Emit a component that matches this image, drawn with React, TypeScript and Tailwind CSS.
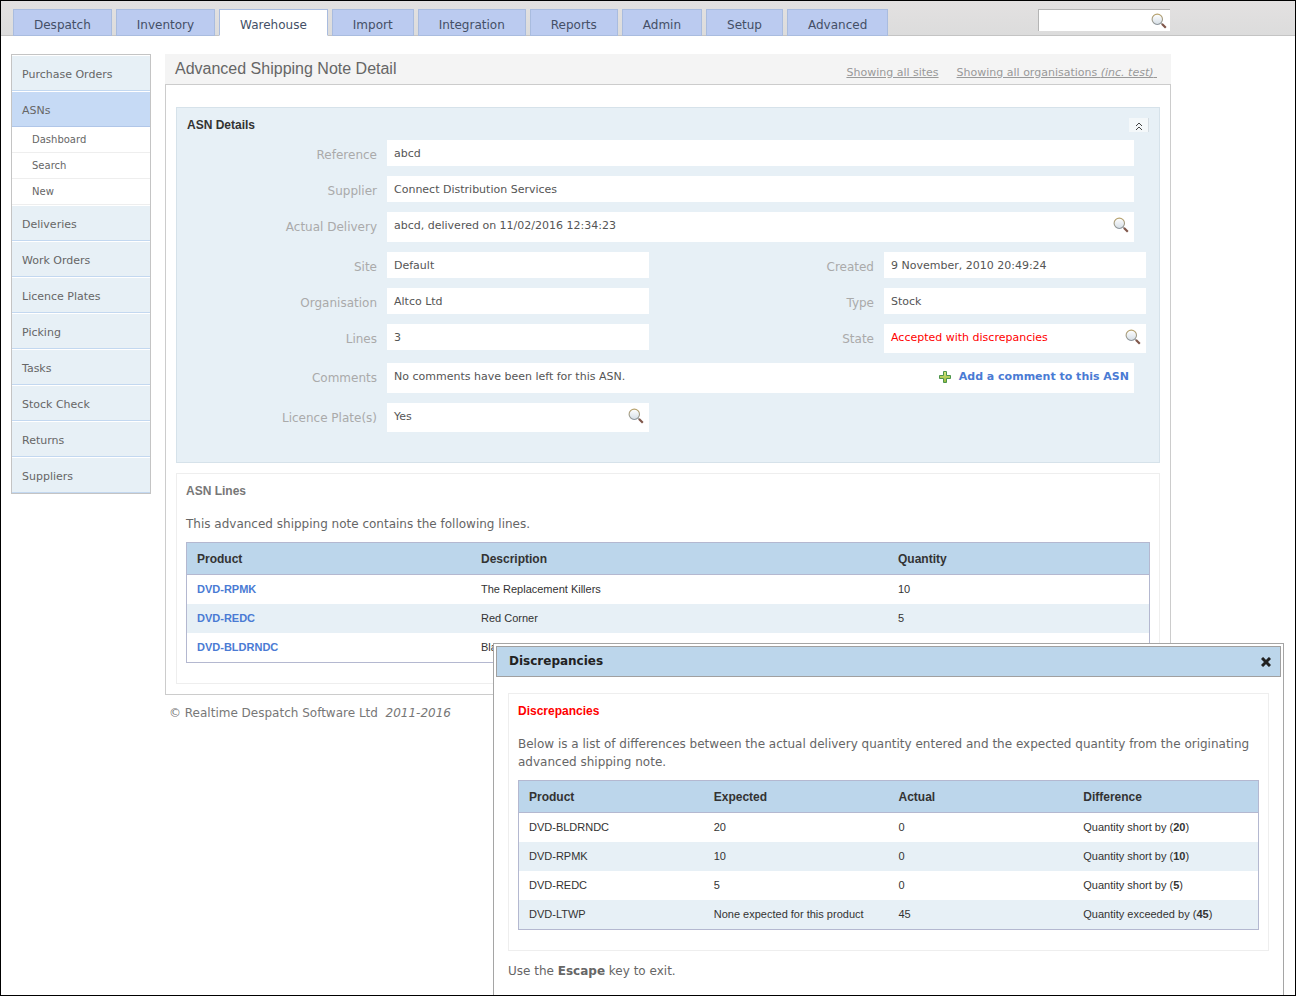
import { type ReactNode } from "react";

const tabs = ["Despatch", "Inventory", "Warehouse", "Import", "Integration", "Reports", "Admin", "Setup", "Advanced"];

const menu = [
  { label: "Purchase Orders" },
  { label: "ASNs", active: true, children: ["Dashboard", "Search", "New"] },
  { label: "Deliveries" },
  { label: "Work Orders" },
  { label: "Licence Plates" },
  { label: "Picking" },
  { label: "Tasks" },
  { label: "Stock Check" },
  { label: "Returns" },
  { label: "Suppliers" },
];

const lines = [
  { product: "DVD-RPMK", description: "The Replacement Killers", quantity: 10 },
  { product: "DVD-REDC", description: "Red Corner", quantity: 5 },
  { product: "DVD-BLDRNDC", description: "Blade Runner", quantity: 20 },
];

const discrepancies = [
  { product: "DVD-BLDRNDC", expected: "20", actual: 0, text: "Quantity short by", diff: 20 },
  { product: "DVD-RPMK", expected: "10", actual: 0, text: "Quantity short by", diff: 10 },
  { product: "DVD-REDC", expected: "5", actual: 0, text: "Quantity short by", diff: 5 },
  { product: "DVD-LTWP", expected: "None expected for this product", actual: 45, text: "Quantity exceeded by", diff: 45 },
];

function Magnifier() {
  return (
    <svg width="16" height="16" viewBox="0 0 16 16" aria-hidden="true">
      <defs>
        <linearGradient id="lens" x1="0" y1="0" x2="0" y2="1">
          <stop offset="0" stopColor="#ffffff" />
          <stop offset="1" stopColor="#d5dee6" />
        </linearGradient>
        <linearGradient id="rim" x1="0" y1="0" x2="0" y2="1">
          <stop offset="0" stopColor="#b9a36c" />
          <stop offset="1" stopColor="#8b949c" />
        </linearGradient>
      </defs>
      <path d="M10 10l1.5 1.5" stroke="#a9a9a9" strokeWidth="1.5" />
      <path d="M11 11l3.8 3.8" stroke="#80574a" strokeWidth="2.2" />
      <circle cx="6.3" cy="6.3" r="5.2" fill="url(#lens)" stroke="url(#rim)" strokeWidth="1.1" />
    </svg>
  );
}

function PlusIcon() {
  return (
    <svg width="12" height="12" viewBox="0 0 12 12" aria-hidden="true">
      <defs>
        <linearGradient id="plus" x1="0" y1="0" x2="0" y2="1">
          <stop offset="0" stopColor="#d8e67e" />
          <stop offset="1" stopColor="#93b83a" />
        </linearGradient>
      </defs>
      <path d="M4.5 .5h3v4h4v3h-4v4h-3v-4h-4v-3h4z" fill="url(#plus)" stroke="#4c944c" />
    </svg>
  );
}

function Lookup({ label }: { label: string }) {
  return (
    <button type="button" aria-label={label} className="mt-[5px] h-4 w-4 shrink-0">
      <Magnifier />
    </button>
  );
}

interface FieldProps {
  label: string;
  height?: string;
  color?: string;
  action?: ReactNode;
  children: ReactNode;
}

function Field({ label, height = "h-[26px]", color = "text-[#555555]", action, children }: FieldProps) {
  return (
    <div className="flex min-w-0 flex-1 items-start gap-[10px]">
      <dt className="h-[26px] w-[200px] shrink-0 text-right text-[12px] leading-[30px] text-[#aaaaaa]">{label}</dt>
      <dd className={`flex min-w-0 flex-1 items-start justify-between bg-white pr-[5px] pl-[7px] ${height}`}>
        <span className={`text-[11px] leading-[28px] ${color}`}>{children}</span>
        {action}
      </dd>
    </div>
  );
}

function Th({ className = "", children }: { className?: string; children: ReactNode }) {
  return (
    <th scope="col" className={`border-b border-[#b4b8d0] pl-[10px] text-left text-[12px] font-bold text-[#333333] ${className}`}>
      {children}
    </th>
  );
}

function Sidebar() {
  return (
    <nav aria-label="Warehouse" className="w-[140px] shrink-0 self-start border border-[#c4c4c4]">
      <ul>
        {menu.map((item) => (
          <li key={item.label}>
            <a
              href="#"
              className={`block h-9 border-t border-b border-t-white pt-px pl-[10px] text-[11px] leading-[36px] text-[#666666] ${
                item.active ? "border-b-[#b0c6e8] bg-[#c6daf5]" : "border-b-[#c3d8f0] bg-[#e7f0f6]"
              }`}
            >
              {item.label}
            </a>
            {item.children && (
              <ul>
                {item.children.map((child) => (
                  <li key={child} className="border-b border-[#eeeeee] bg-white">
                    <a href="#" className="block pl-5 text-[10px] leading-[25px] text-[#666666]">
                      {child}
                    </a>
                  </li>
                ))}
              </ul>
            )}
          </li>
        ))}
      </ul>
    </nav>
  );
}

function AsnDetails() {
  return (
    <section className="border border-[#d6e2ea] bg-[#e7f0f6] pb-[30px]">
      <div className="flex h-8 items-start justify-between pr-[10px] pl-[10px]">
        <h2 className="pt-[9px] font-['Liberation_Sans',sans-serif] text-[12px] leading-4 font-bold text-[#333333]">ASN Details</h2>
        <button
          type="button"
          aria-label="Collapse"
          className="mt-[10px] flex h-[14px] w-5 items-center justify-center border-r border-[#d4dce2] bg-[#f4f8fa] pt-[3px]"
        >
          <svg width="8" height="9" viewBox="0 0 8 9" fill="none" stroke="#444444" aria-hidden="true">
            <path d="M1 4l3-3 3 3M1 8l3-3 3 3" />
          </svg>
        </button>
      </div>
      <dl className="flex flex-col gap-[10px]">
        <div className="flex pr-[25px]">
          <Field label="Reference">abcd</Field>
        </div>
        <div className="flex pr-[25px]">
          <Field label="Supplier">Connect Distribution Services</Field>
        </div>
        <div className="flex pr-[25px]">
          <Field label="Actual Delivery" height="h-[30px]" action={<Lookup label="View delivery" />}>
            abcd, delivered on 11/02/2016 12:34:23
          </Field>
        </div>
        <div className="flex gap-[25px] pr-[13px]">
          <Field label="Site">Default</Field>
          <Field label="Created">9 November, 2010 20:49:24</Field>
        </div>
        <div className="flex gap-[25px] pr-[13px]">
          <Field label="Organisation">Altco Ltd</Field>
          <Field label="Type">Stock</Field>
        </div>
        <div className="flex gap-[25px] pr-[13px]">
          <Field label="Lines">3</Field>
          <Field label="State" height="h-[29px]" color="text-[#ff0000]" action={<Lookup label="View discrepancies" />}>
            Accepted with discrepancies
          </Field>
        </div>
        <div className="flex pr-[25px]">
          <Field
            label="Comments"
            height="h-[30px]"
            action={
              <a href="#" className="flex items-center gap-2 text-[11px] leading-[28px] font-bold text-[#4a7bd4]">
                <PlusIcon />
                Add a comment to this ASN
              </a>
            }
          >
            No comments have been left for this ASN.
          </Field>
        </div>
        <div className="flex gap-[25px] pr-[13px]">
          <Field label="Licence Plate(s)" height="h-[29px]" action={<Lookup label="View licence plates" />}>
            Yes
          </Field>
          <div className="flex-1" />
        </div>
      </dl>
    </section>
  );
}

function AsnLines() {
  return (
    <section className="border border-[#eeeeee] px-[9px] pt-[9px] pb-5">
      <h2 className="font-['Liberation_Sans',sans-serif] text-[12px] leading-4 font-bold text-[#777777]">ASN Lines</h2>
      <p className="mt-4 text-[12px] leading-[18px]">This advanced shipping note contains the following lines.</p>
      <table className="mt-[9px] w-full table-fixed border-separate border-spacing-0 border border-[#b4b8d0] font-['Liberation_Sans',sans-serif] text-[11px] text-[#333333]">
        <thead>
          <tr className="h-8 bg-[#bcd6eb]">
            <Th className="w-[284px]">Product</Th>
            <Th className="w-[417px]">Description</Th>
            <Th>Quantity</Th>
          </tr>
        </thead>
        <tbody>
          {lines.map((line) => (
            <tr key={line.product} className="h-[29px] bg-white even:bg-[#e7f0f6]">
              <td className="pl-[10px]">
                <a href="#" className="font-bold text-[#4a7bd4]">
                  {line.product}
                </a>
              </td>
              <td className="pl-[10px]">{line.description}</td>
              <td className="pl-[10px]">{line.quantity}</td>
            </tr>
          ))}
        </tbody>
      </table>
    </section>
  );
}

function DiscrepanciesDialog() {
  return (
    <div
      role="dialog"
      aria-labelledby="dialog-title"
      className="absolute right-[11px] bottom-0 w-[791px] border border-b-0 border-[#a5a5a5] bg-white p-[2px] pb-[15px]"
    >
      <div className="flex h-[31px] items-center justify-between border border-[#a0a0a0] bg-[#bcd6eb] pr-[9px] pl-3">
        <h2 id="dialog-title" className="text-[12px] leading-[29px] font-bold text-[#222222]">
          Discrepancies
        </h2>
        <button type="button" aria-label="Close">
          <svg width="10" height="10" viewBox="0 0 10 10" stroke="#222222" strokeWidth="3" aria-hidden="true">
            <path d="M1 1l8 8M9 1l-8 8" />
          </svg>
        </button>
      </div>
      <div className="px-3 pt-4">
        <section className="border border-[#eeeeee] px-[9px] pt-[9px] pb-5">
          <h3 className="font-['Liberation_Sans',sans-serif] text-[12px] leading-4 font-bold text-[#ff0000]">Discrepancies</h3>
          <p className="mt-4 text-[12px] leading-[18px]">
            Below is a list of differences between the actual delivery quantity entered and the expected quantity from the originating
            advanced shipping note.
          </p>
          <table className="mt-[9px] w-full table-fixed border-separate border-spacing-0 border border-[#b4b8d0] font-['Liberation_Sans',sans-serif] text-[11px] text-[#333333]">
            <thead>
              <tr className="h-8 bg-[#bcd6eb]">
                <Th>Product</Th>
                <Th>Expected</Th>
                <Th>Actual</Th>
                <Th>Difference</Th>
              </tr>
            </thead>
            <tbody>
              {discrepancies.map((row) => (
                <tr key={row.product} className="h-[29px] bg-white even:bg-[#e7f0f6]">
                  <td className="pl-[10px]">{row.product}</td>
                  <td className="pl-[10px]">{row.expected}</td>
                  <td className="pl-[10px]">{row.actual}</td>
                  <td className="pl-[10px]">
                    {row.text} (<b>{row.diff}</b>)
                  </td>
                </tr>
              ))}
            </tbody>
          </table>
        </section>
        <p className="mt-[11px] text-[12px] leading-[18px]">
          Use the <b>Escape</b> key to exit.
        </p>
      </div>
    </div>
  );
}

export default function App() {
  return (
    <div className="relative min-h-screen overflow-hidden border border-black bg-white font-['DejaVu_Sans',sans-serif] text-[#666666]">
      <header className="border-b border-[#c4c4c4] bg-linear-to-b from-[#e3e1e1] to-[#dcdcdc]">
        <div className="flex max-w-[1170px] items-start justify-between pt-2 pr-px pl-3">
          <nav aria-label="Main" className="-mb-px flex gap-1">
            {tabs.map((tab) => (
              <a
                key={tab}
                href="#"
                className={`h-[27px] border border-[#a9bcdf] px-[20px] text-[12px] leading-[30px] text-[#444f66] ${
                  tab === "Warehouse" ? "border-b-white bg-white" : "bg-[#bbcbf0]"
                }`}
              >
                {tab}
              </a>
            ))}
          </nav>
          <form role="search" className="flex h-[22px] w-[132px] border-t border-l border-[#b5b5b5] bg-white">
            <input type="text" aria-label="Search" className="w-0 flex-1 px-1 text-[11px] outline-none" />
            <button type="submit" aria-label="Go" className="mt-[3px] mr-[3px] h-4 w-4">
              <Magnifier />
            </button>
          </form>
        </div>
      </header>

      <div className="flex max-w-[1170px] gap-[14px] pt-[18px] pl-[10px]">
        <Sidebar />
        <main className="min-w-0 flex-1">
          <div className="flex h-[30px] items-start justify-between bg-[#f4f4f4] pr-[14px] pl-[10px]">
            <h1 className="font-['Liberation_Sans',sans-serif] text-[16px] leading-[29px]">Advanced Shipping Note Detail</h1>
            <div className="flex gap-[18px] pt-[10px] text-[11px] leading-[18px] text-[#999999]">
              <a href="#" className="underline">
                Showing all sites
              </a>
              <a href="#" className="underline">
                Showing all organisations <i>(inc. test)</i>&nbsp;
              </a>
            </div>
          </div>
          <div className="flex flex-col gap-[10px] border border-[#cccccc] px-[10px] pt-[22px] pb-[10px]">
            <AsnDetails />
            <AsnLines />
          </div>
          <footer className="pt-[9px] pl-1 text-[12px] leading-[18px] text-[#777777]">
            © Realtime Despatch Software Ltd &nbsp;<i>2011-2016</i>
          </footer>
        </main>
      </div>

      <DiscrepanciesDialog />
    </div>
  );
}
